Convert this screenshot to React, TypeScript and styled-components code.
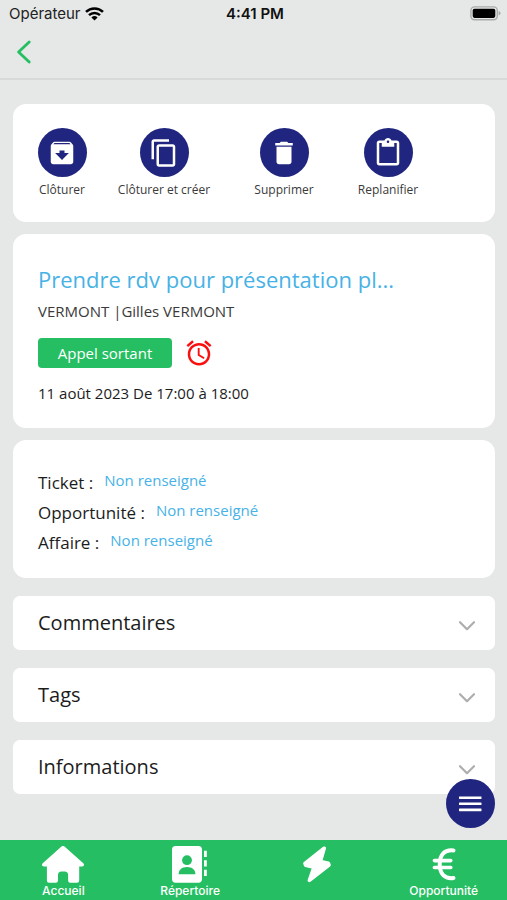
import React from 'react';
import styled, { createGlobalStyle } from 'styled-components';
import {
  MdAlarm,
  MdArchive,
  MdContentCopy,
  MdContentPaste,
  MdDelete,
} from 'react-icons/md';

const color = {
  page: '#e6e8e7',
  rule: '#d8dad9',
  card: '#ffffff',
  green: '#26be62',
  navy: '#20267f',
  sky: '#47b2e6',
  red: '#fa0f0f',
  ink: '#1c1c1c',
  soft: '#3a3a3a',
  chevron: '#adadad',
};

const GlobalStyle = createGlobalStyle`
  *, *::before, *::after { box-sizing: border-box; }
  body {
    margin: 0;
    background: ${color.page};
    color: ${color.ink};
    font-family: "Open Sans", "Noto Sans", sans-serif;
  }
  button {
    border: 0;
    padding: 0;
    background: none;
    color: inherit;
    font: inherit;
    cursor: pointer;
  }
  h1, h2, p, dl, dt, dd { margin: 0; font-weight: 400; }
  svg { display: block; }
`;

const Screen = styled.div`
  display: flex;
  flex-direction: column;
  min-height: 100vh;
`;

const StatusBar = styled.div`
  display: grid;
  grid-template-columns: 1fr auto 1fr;
  align-items: center;
  height: 27px;
  padding: 0 6px 0 9px;
  font-family: Inter, sans-serif;
  font-size: 15px;
  color: #222;
`;

const Carrier = styled.div`
  display: flex;
  align-items: center;
  gap: 4px;
`;

const Clock = styled.time`
  font-size: 15px;
  font-weight: 600;
  color: #111;
`;

const Battery = styled.div`
  justify-self: end;
`;

const Header = styled.header`
  display: flex;
  align-items: center;
  height: 53px;
  padding: 0 16px 1px;
  border-bottom: 2px solid ${color.rule};
`;

const Content = styled.main`
  display: flex;
  flex: 1;
  flex-direction: column;
  gap: 12px;
  padding: 24px 12px 46px 13px;
`;

const Card = styled.section`
  padding: 24px 25px;
  border-radius: 13px;
  background: ${color.card};
`;

const ActionCard = styled(Card)`
  display: grid;
  grid-template-columns: 52fr 152fr 88fr 120fr 24fr;
  padding: 24px 23px;
`;

const Action = styled.button`
  display: flex;
  flex-direction: column;
  align-items: center;
  gap: 4px;
  height: 70px;
  font-size: 12px;
  line-height: 17px;
  white-space: nowrap;
  color: ${color.soft};
`;

const Disc = styled.span`
  display: grid;
  place-items: center;
  width: 49px;
  height: 49px;
  border-radius: 50%;
  background: ${color.navy};
  color: #fff;
`;

const Title = styled.h1`
  margin-top: 5px;
  font-size: 22px;
  line-height: 32px;
  color: ${color.sky};
`;

const Contact = styled.p`
  margin-top: 5px;
  font-size: 15px;
  line-height: 22px;
  color: ${color.soft};
`;

const TypeRow = styled.div`
  display: flex;
  align-items: center;
  gap: 12px;
  margin-top: 16px;
  color: ${color.red};
`;

const TypeBadge = styled.span`
  min-width: 134px;
  border-radius: 4px;
  background: ${color.green};
  color: #fff;
  font-size: 15px;
  line-height: 30px;
  text-align: center;
`;

const Schedule = styled.p`
  margin: 14px 0 0;
  font-size: 15px;
  line-height: 22px;
`;

const LinkList = styled.dl`
  display: flex;
  flex-direction: column;
  gap: 4px;
  padding-top: 6px;
  margin-bottom: -2px;
`;

const LinkRow = styled.div`
  display: flex;
  align-items: flex-start;
  gap: 11px;
`;

const LinkLabel = styled.dt`
  font-size: 17px;
  line-height: 26px;
`;

const LinkValue = styled.dd`
  font-size: 15px;
  line-height: 20px;
  color: ${color.sky};
`;

const Accordion = styled.div`
  display: flex;
  flex-direction: column;
  gap: 18px;
  margin-top: 6px;
`;

const AccordionHead = styled.button`
  display: flex;
  align-items: center;
  justify-content: space-between;
  width: 100%;
  height: 54px;
  padding: 0 19px 0 25px;
  border-radius: 7px;
  background: ${color.card};
  font-size: 20px;
  line-height: 28px;
  text-align: left;

  svg { margin-top: 5px; }
`;

const MenuButton = styled.button`
  position: fixed;
  right: 12px;
  bottom: 72px;
  display: grid;
  place-items: center;
  width: 49px;
  height: 49px;
  border-radius: 50%;
  background: ${color.navy};
`;

const TabBar = styled.nav`
  position: sticky;
  bottom: 0;
  display: grid;
  grid-template-columns: repeat(4, 1fr);
  height: 60px;
  background: ${color.green};
`;

const Tab = styled.a`
  display: flex;
  flex-direction: column;
  align-items: center;
  padding-top: 6px;
  color: #fff;
  font-family: Inter, sans-serif;
  font-size: 12px;
  font-weight: 500;
  line-height: 16px;
  text-decoration: none;
`;

const WifiIcon = () => (
  <svg width="19" height="14" viewBox="0 0 19 14" fill="none" stroke="#000" strokeWidth="2.5" aria-hidden="true">
    <path d="M1 4.9a12.2 12.2 0 0 1 17 0" />
    <path d="M4 8.2a8 8 0 0 1 11 0" />
    <path d="M9.5 13.6 6.4 10.5a4.5 4.5 0 0 1 6.2 0z" fill="#000" stroke="none" />
  </svg>
);

const BatteryIcon = () => (
  <svg width="31" height="15" viewBox="0 0 31 15" aria-hidden="true">
    <rect x=".9" y=".9" width="26.4" height="12.8" rx="3.6" fill="none" stroke="#a9abaa" strokeWidth="1.4" />
    <rect x="2.7" y="2.7" width="22.6" height="9.2" rx="1.8" fill="#000" />
    <path d="M28.6 5.1c1.3.4 2 1.2 2 2.2s-.7 1.8-2 2.2z" fill="#a9abaa" />
  </svg>
);

const BackIcon = () => (
  <svg width="16" height="24" viewBox="0 0 16 24" fill="none" stroke={color.green} strokeWidth="2.8" strokeLinecap="round" strokeLinejoin="round" aria-hidden="true">
    <path d="M13.2 1.9 2.6 12l10.6 10.1" />
  </svg>
);

const ChevronIcon = () => (
  <svg width="18" height="12" viewBox="0 0 18 12" fill="none" stroke={color.chevron} strokeWidth="2.2" strokeLinecap="round" strokeLinejoin="round" aria-hidden="true">
    <path d="m2 2.2 7 7 7-7" />
  </svg>
);

const MenuIcon = () => (
  <svg width="24" height="16" viewBox="0 0 24 16" fill="#fff" aria-hidden="true">
    <rect x="0" y=".4" width="22.5" height="2.6" rx=".4" />
    <rect x="0" y="6.5" width="22.5" height="2.6" rx=".4" />
    <rect x="0" y="12.6" width="22.5" height="2.6" rx=".4" />
  </svg>
);

const HomeIcon = () => (
  <svg width="42" height="37" viewBox="0 0 42 37" fill="#fff" aria-hidden="true">
    <path d="M19.2.7a2.7 2.7 0 0 1 3.6 0L41.3 17.2c1.3 1.2.6 3.2-1.2 3.2H37.2V34.4a2.3 2.3 0 0 1-2.3 2.3H28.3a2.2 2.2 0 0 1-2.2-2.2V29a3.5 3.5 0 0 0-3.5-3.5H19.5A3.5 3.5 0 0 0 16 29v5.5a2.2 2.2 0 0 1-2.2 2.2H7.2a2.3 2.3 0 0 1-2.3-2.3V20.4H1.9C.1 20.4-.6 18.4.7 17.2z" />
  </svg>
);

const ContactsIcon = () => (
  <svg width="36" height="37" viewBox="0 0 36 37" aria-hidden="true">
    <rect width="30" height="36.7" rx="3.6" fill="#fff" />
    <circle cx="15" cy="14.2" r="4.9" fill={color.green} />
    <path d="M6.6 28.2c0-4.4 3.2-7.2 8.4-7.2s8.4 2.8 8.4 7.2z" fill={color.green} />
    <path d="M33.4 4.7v6.3M33.4 14.3v6.2M33.4 23.8v6.2" stroke="#fff" strokeWidth="2.8" />
  </svg>
);

const BoltIcon = () => (
  <svg width="28" height="37" viewBox="0 0 28 37" fill="#fff" stroke="#fff" strokeWidth="3.6" strokeLinejoin="round" aria-hidden="true">
    <path d="M21.2 2.2 2 17.4 2.6 19.2 11 21.2 6.4 34.4 26 19 25.4 17.2 17.4 15.4z" />
  </svg>
);

const EuroIcon = () => (
  <svg width="24" height="37" viewBox="0 0 24 37" fill="none" stroke="#fff" strokeWidth="4" strokeLinecap="round" aria-hidden="true">
    <path d="M21.5 4.5C12.5 3.3 7.7 9 7.7 18.3S12.5 33.2 21.5 32" />
    <path d="M2.4 14.6h16.4M2.4 21.5h16.4" strokeWidth="3.6" />
  </svg>
);

const actions = [
  { label: 'Clôturer', Icon: MdArchive },
  { label: 'Clôturer et créer', Icon: MdContentCopy },
  { label: 'Supprimer', Icon: MdDelete },
  { label: 'Replanifier', Icon: MdContentPaste },
];

const links = ['Ticket', 'Opportunité', 'Affaire'];

const sections = ['Commentaires', 'Tags', 'Informations'];

const tabs = [
  { label: 'Accueil', Icon: HomeIcon },
  { label: 'Répertoire', Icon: ContactsIcon },
  { label: '', name: 'Actions rapides', Icon: BoltIcon },
  { label: 'Opportunité', Icon: EuroIcon },
];

export default function App() {
  return (
    <Screen>
      <GlobalStyle />
      <StatusBar>
        <Carrier>
          Opérateur
          <WifiIcon />
        </Carrier>
        <Clock>4:41 PM</Clock>
        <Battery>
          <BatteryIcon />
        </Battery>
      </StatusBar>
      <Header>
        <button type="button" aria-label="Retour">
          <BackIcon />
        </button>
      </Header>
      <Content>
        <ActionCard>
          {actions.map(({ label, Icon }) => (
            <Action key={label} type="button">
              <Disc>
                <Icon size={30} />
              </Disc>
              {label}
            </Action>
          ))}
        </ActionCard>
        <Card>
          <Title>Prendre rdv pour présentation pl...</Title>
          <Contact>VERMONT |Gilles VERMONT</Contact>
          <TypeRow>
            <TypeBadge>Appel sortant</TypeBadge>
            <MdAlarm size={30} />
          </TypeRow>
          <Schedule>11 août 2023 De 17:00 à 18:00</Schedule>
        </Card>
        <Card>
          <LinkList>
            {links.map((label) => (
              <LinkRow key={label}>
                <LinkLabel>{label} :</LinkLabel>
                <LinkValue>Non renseigné</LinkValue>
              </LinkRow>
            ))}
          </LinkList>
        </Card>
        <Accordion>
          {sections.map((label) => (
            <AccordionHead key={label} type="button" aria-expanded="false">
              {label}
              <ChevronIcon />
            </AccordionHead>
          ))}
        </Accordion>
      </Content>
      <MenuButton type="button" aria-label="Menu">
        <MenuIcon />
      </MenuButton>
      <TabBar>
        {tabs.map(({ label, name, Icon }) => (
          <Tab key={label || name} href="#" aria-label={name}>
            <Icon />
            {label}
          </Tab>
        ))}
      </TabBar>
    </Screen>
  );
}
